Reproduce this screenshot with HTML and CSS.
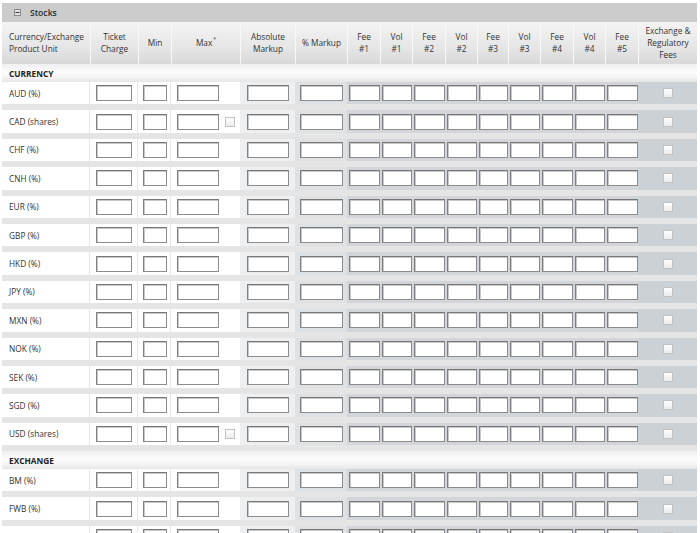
FILE: index.html
```html
<!DOCTYPE html>
<html>
  <head>
    <title>Stocks</title>
    <link rel="stylesheet" href="styles.css">
  </head>
  <body>
    <div class="panel-bar">
      <svg class="collapse-icon" width="7" height="7" viewBox="0 0 7 7">
        <rect x="0.5" y="0.5" width="6" height="6" fill="#e4e4e4" stroke="#8a8a8a"></rect>
        <line x1="1.5" y1="3.5" x2="5.5" y2="3.5" stroke="#333" stroke-width="1"></line>
      </svg>
      <span class="panel-title">Stocks</span>
    </div>

    <div class="header-row">
      <div class="header-cell header-first">Currency/Exchange<br>Product Unit</div>
      <div class="header-cell">Ticket<br>Charge</div>
      <div class="header-cell">Min</div>
      <div class="header-cell"><span>Max<sup class="max-mark">*</sup></span></div>
      <div class="header-cell">Absolute<br>Markup</div>
      <div class="header-cell">% Markup</div>
      <div class="header-cell">Fee<br>#1</div>
      <div class="header-cell">Vol<br>#1</div>
      <div class="header-cell">Fee<br>#2</div>
      <div class="header-cell">Vol<br>#2</div>
      <div class="header-cell">Fee<br>#3</div>
      <div class="header-cell">Vol<br>#3</div>
      <div class="header-cell">Fee<br>#4</div>
      <div class="header-cell">Vol<br>#4</div>
      <div class="header-cell">Fee<br>#5</div>
      <div class="header-cell">Exchange &amp;<br>Regulatory<br>Fees</div>
    </div>

    <div class="section-row">CURRENCY</div>
    <div class="js-currency-rows"></div>

    <div class="section-row">EXCHANGE</div>
    <div class="js-exchange-rows"></div>

    <script>
      const currencyRows = [
        ['AUD (%)', false],
        ['CAD (shares)', true],
        ['CHF (%)', false],
        ['CNH (%)', false],
        ['EUR (%)', false],
        ['GBP (%)', false],
        ['HKD (%)', false],
        ['JPY (%)', false],
        ['MXN (%)', false],
        ['NOK (%)', false],
        ['SEK (%)', false],
        ['SGD (%)', false],
        ['USD (shares)', true]
      ];

      // last row is only partly on screen, its label sits below the fold
      const exchangeRows = [
        ['BM (%)', false],
        ['FWB (%)', false],
        ['', false]
      ];

      function rowHtml(label, maxCheck) {
        let fees = '';
        for (let i = 0; i < 9; i++) {
          fees += `<div class="cell cell-fee"><span class="field field-fee"></span></div>`;
        }

        return `<div class="row">
          <div class="cell cell-label">${label}</div>
          <div class="cell cell-plain"><span class="field field-ticket"></span></div>
          <div class="cell cell-plain cell-min"><span class="field field-min"></span></div>
          <div class="cell cell-max">
            <span class="field field-max"></span>
            ${maxCheck ? '<span class="check check-max"></span>' : ''}
          </div>
          <div class="cell cell-abs"><span class="field field-abs"></span></div>
          <div class="cell cell-pct"><span class="field field-pct"></span></div>
          ${fees}
          <div class="cell cell-exch"><span class="check"></span></div>
        </div>`;
      }

      function renderRows(selector, rows) {
        let html = '';
        rows.forEach((row) => {
          html += rowHtml(row[0], row[1]);
        });
        document.querySelector(selector).innerHTML = html;
      }

      renderRows('.js-currency-rows', currencyRows);
      renderRows('.js-exchange-rows', exchangeRows);
    </script>
  </body>
</html>
```

FILE: styles.css
```css
html {
    overflow: hidden;
}
body {
    margin: 3px 3px 0 2px;
    font-family: "Open Sans", Arial, sans-serif;
    font-size: 8.3px;
    color: #333;
    background-color: white;
}
.panel-bar {
    height: 19px;
    background-color: #cccccc;
    display: flex;
    align-items: center;
    padding-left: 12px;
}
.collapse-icon {
    margin-right: 9px;
}
.panel-title {
    font-size: 8.6px;
    font-weight: 600;
    color: #2b2b2b;
}
.header-row,
.row {
    display: grid;
    grid-template-columns: 88px 48px 33px 69px 55px 52px 33px 32px 33px 32px 31px 32px 33px 32px 33px 59px;
}
.header-row {
    height: 42px;
    background: linear-gradient(#f4f4f4, #e6e6e6 60%, #d8d8d8);
}
.header-cell {
    display: flex;
    align-items: center;
    justify-content: center;
    text-align: center;
    line-height: 12px;
    border-left: 1px solid #f8f8f8;
}
.header-first {
    justify-content: flex-start;
    text-align: left;
    padding-left: 7px;
    border-left: none;
}
.max-mark {
    font-size: 5px;
    line-height: 0;
    vertical-align: 5px;
    margin-left: 1px;
}
.section-row {
    height: 18px;
    display: flex;
    align-items: center;
    padding-left: 7px;
    font-weight: bold;
    color: #222;
    background: linear-gradient(#efefef, #fdfdfd 45%, #f6f6f6 70%, #e6e6e6);
}
.row {
    height: 22.4px;
    border-bottom: 6px solid #e5e5e5;
}
.cell {
    display: flex;
    align-items: center;
}
.cell-label {
    padding-left: 7px;
    background-color: #fff;
    border-right: 1px solid #e6e6e6;
}
.cell-plain {
    padding-left: 6px;
    background-color: #fff;
    border-right: 1px solid #e6e6e6;
}
.cell-min {
    padding-left: 5px;
}
.cell-max {
    padding-left: 6px;
    background-color: #fff;
}
.cell-abs {
    padding-left: 7px;
    background-color: #edeff1;
}
.cell-pct {
    padding-left: 5px;
    background-color: #dfe2e5;
}
.cell-fee {
    padding-left: 2px;
    background-color: #d2d6da;
}
.cell-exch {
    justify-content: center;
    background-color: #ccd1d6;
}
.field {
    box-sizing: border-box;
    height: 16px;
    background-color: #fff;
    border: 1px solid #8c8c8c;
    border-top-color: #777;
    border-left-color: #808080;
    box-shadow: inset 1px 1px 0 #c8c8c8;
}
.field-ticket {
    width: 36px;
}
.field-min {
    width: 24px;
}
.field-max {
    width: 42px;
}
.field-abs {
    width: 42px;
}
.field-pct {
    width: 43px;
}
.field-fee {
    width: 100%;
}
.check {
    box-sizing: border-box;
    width: 10px;
    height: 10px;
    border: 1px solid #c2c2c2;
    background: linear-gradient(#fdfdfd, #ececec);
}
.check-max {
    margin-left: 6px;
}
```
